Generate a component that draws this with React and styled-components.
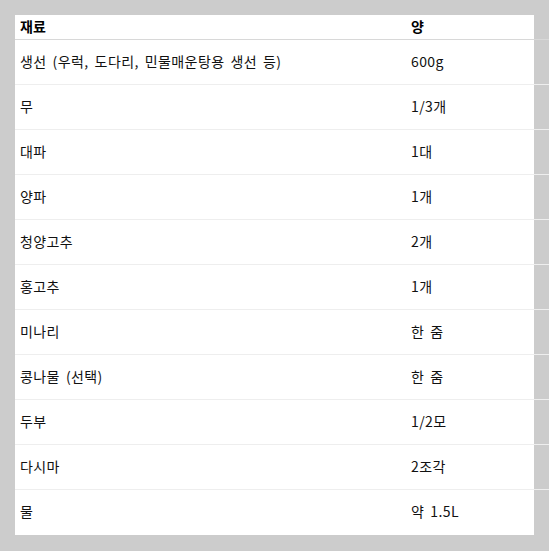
import React from "react";
import styled, { createGlobalStyle } from "styled-components";

const Global = createGlobalStyle`
  html, body { margin: 0; padding: 0; overflow: hidden; }
  body {
    background: #cccccc;
    font-family: "Noto Sans CJK KR", "Noto Sans", sans-serif;
  }
`;

const Page = styled.div`
  padding: 15px;
  width: 549px;
  height: 551px;
  box-sizing: border-box;
`;

const Panel = styled.div`
  background: #ffffff;
  width: 519px;
  height: 520px;
  overflow: visible;
`;

const Table = styled.table`
  border-collapse: collapse;
  width: 560px;
  font-size: 14px;
  color: #111;
`;

const Th = styled.th`
  text-align: left;
  font-weight: 700;
  color: #000;
  height: 24px;
  padding: 0 5px 4px;
  box-sizing: border-box;
  line-height: 17px;
  vertical-align: bottom;
  border-bottom: 1px solid #d8d8d8;
  width: ${(p) => p.$w || "auto"};
`;

const Td = styled.td`
  height: 44px;
  padding: 0 5px;
  line-height: 17px;
  vertical-align: middle;
  letter-spacing: 0.4px;
  word-spacing: 2.5px;
  border-bottom: 1px solid ${(p) => (p.$last ? "transparent" : "#eeeeee")};
`;

const rows = [
  ["생선 (우럭, 도다리, 민물매운탕용 생선 등)", "600g"],
  ["무", "1/3개"],
  ["대파", "1대"],
  ["양파", "1개"],
  ["청양고추", "2개"],
  ["홍고추", "1개"],
  ["미나리", "한 줌"],
  ["콩나물 (선택)", "한 줌"],
  ["두부", "1/2모"],
  ["다시마", "2조각"],
  ["물", "약 1.5L"],
];

export default function App() {
  return (
    <>
      <Global />
      <Page>
        <Panel>
          <Table>
            <thead>
              <tr>
                <Th $w="391px">재료</Th>
                <Th>양</Th>
              </tr>
            </thead>
            <tbody>
              {rows.map(([a, b], i) => (
                <tr key={i}>
                  <Td $last={i === rows.length - 1}>{a}</Td>
                  <Td $last={i === rows.length - 1}>{b}</Td>
                </tr>
              ))}
            </tbody>
          </Table>
        </Panel>
      </Page>
    </>
  );
}
